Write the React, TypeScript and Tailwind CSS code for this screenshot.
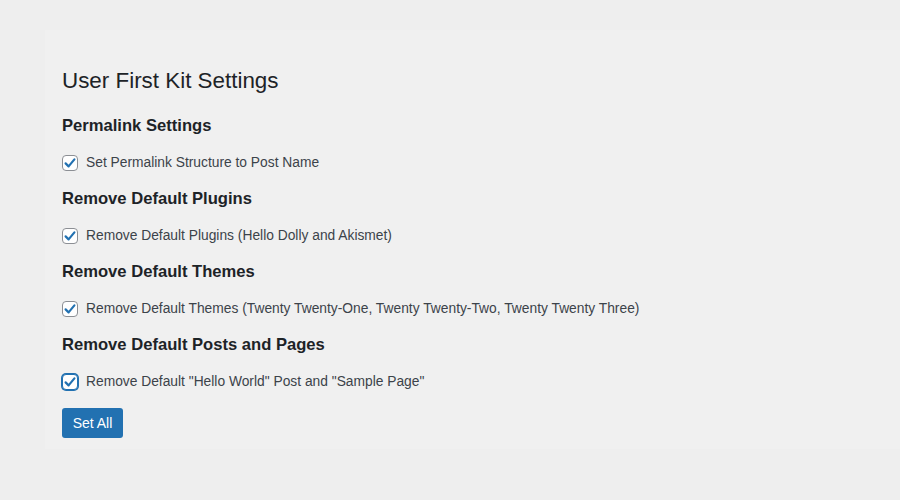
import React from "react";

function Check({ focused }: { focused?: boolean }) {
  return (
    <span
      className={
        "flex h-4 w-4 shrink-0 items-center justify-center rounded-[4px] bg-white " +
        (focused
          ? "border border-[#2271b1] shadow-[0_0_0_1px_#2271b1]"
          : "border border-[#8c8f94]")
      }
    >
      <svg width="14" height="14" viewBox="0 0 14 14">
        <path
          d="M2.6 7.4 L5.6 10.4 L11.4 3.4"
          fill="none"
          stroke="#2271b1"
          strokeWidth="2.2"
          strokeLinecap="round"
          strokeLinejoin="round"
        />
      </svg>
    </span>
  );
}

const sections = [
  { h: "Permalink Settings", l: "Set Permalink Structure to Post Name" },
  { h: "Remove Default Plugins", l: "Remove Default Plugins (Hello Dolly and Akismet)" },
  {
    h: "Remove Default Themes",
    l: "Remove Default Themes (Twenty Twenty-One, Twenty Twenty-Two, Twenty Twenty Three)",
  },
  { h: "Remove Default Posts and Pages", l: 'Remove Default "Hello World" Post and "Sample Page"', f: true },
];

export default function App() {
  return (
    <div
      className="h-[500px] w-[900px] overflow-hidden bg-[#eeeeee] pt-[30px] pl-[45px]"
      style={{ fontFamily: '"Liberation Sans", Arial, sans-serif' }}
    >
      <div className="bg-[#f0f0f0] pt-[36px] pb-[11px] pl-[17px]">
        <h1 className="text-[22.4px] leading-[29px] font-normal text-[#1d2327]">User First Kit Settings</h1>
        <div className="mt-[20px] flex flex-col gap-[17px]">
          {sections.map((s) => (
            <div key={s.h} className="flex flex-col gap-[18px]">
              <h2 className="text-[16.6px] leading-[22px] font-bold text-[#1d2327]">{s.h}</h2>
              <label className="flex h-4 items-center gap-[8px] text-[13.8px] text-[#3c434a]">
                <Check focused={s.f} />
                <span>{s.l}</span>
              </label>
            </div>
          ))}
        </div>
        <button className="mt-[18px] h-[30px] w-[61px] rounded-[3px] bg-[#2271b1] text-[14px] text-white">
          Set All
        </button>
      </div>
    </div>
  );
}
